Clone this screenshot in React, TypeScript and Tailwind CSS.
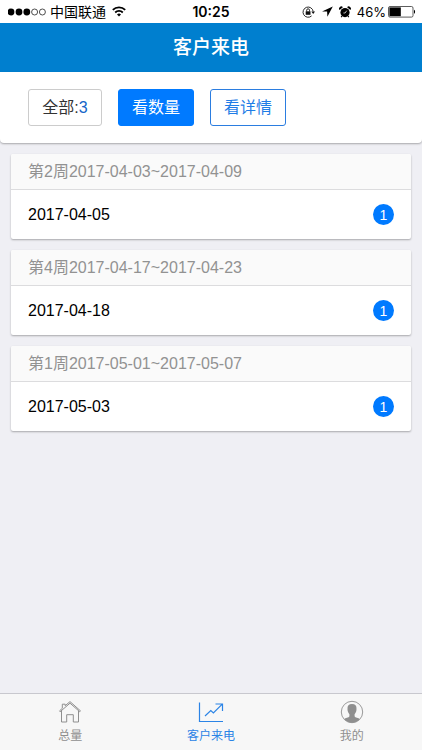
import React from "react";

const weeks = [
  { title: "第2周2017-04-03~2017-04-09", day: "2017-04-05", count: 1 },
  { title: "第4周2017-04-17~2017-04-23", day: "2017-04-18", count: 1 },
  { title: "第1周2017-05-01~2017-05-07", day: "2017-05-03", count: 1 },
];

function SignalDots() {
  return (
    <svg width="39" height="8" viewBox="0 0 39 8" aria-hidden="true">
      {[3, 11, 18.8].map((x) => (
        <circle key={x} cx={x} cy="4" r="3.4" fill="#000" />
      ))}
      {[26.6, 34.4].map((x) => (
        <circle key={x} cx={x} cy="4" r="3" fill="none" stroke="#222" strokeWidth="0.8" />
      ))}
    </svg>
  );
}

function WifiIcon() {
  return (
    <svg width="14" height="11" viewBox="0 0 14 11" fill="none" stroke="#000" strokeWidth="1.8" aria-hidden="true">
      <path d="M0.8 3.9a8.8 8.8 0 0 1 12.4 0" />
      <path d="M3.2 6.5a5.4 5.4 0 0 1 7.6 0" />
      <path d="M7 10.4L5 8.4a2.9 2.9 0 0 1 4 0z" fill="#000" stroke="none" />
    </svg>
  );
}

function RotationLockIcon() {
  return (
    <svg width="14" height="12" viewBox="0 0 14 12" fill="none" stroke="#111" aria-hidden="true">
      <path d="M11.2 5.5A5.1 5.1 0 1 0 9.6 9.9" strokeWidth="0.9" />
      <path d="M9.3 5.6h3.8L11.2 8z" fill="#111" stroke="none" />
      <rect x="3.7" y="5.3" width="4.8" height="3.5" fill="#111" stroke="none" />
      <path d="M4.7 5.5V4.2a1.4 1.4 0 0 1 2.8 0v1.3" strokeWidth="0.9" />
    </svg>
  );
}

function LocationIcon() {
  return (
    <svg width="11" height="11" viewBox="0 0 11 11" aria-hidden="true">
      <path d="M10.8 0.4L0 5.6h5.1l0.3 5.2z" fill="#000" />
    </svg>
  );
}

function AlarmIcon() {
  return (
    <svg width="12" height="12" viewBox="0 0 12 12" aria-hidden="true">
      <circle cx="6" cy="6.6" r="4.6" fill="#000" />
      <path d="M0.6 3.9A2.1 2.1 0 0 1 3.9 1.2zM11.4 3.9A2.1 2.1 0 0 0 8.1 1.2z" fill="#000" />
      <path d="M3 10l-0.8 1.2M9 10l0.8 1.2" stroke="#000" strokeWidth="1.2" />
      <path d="M7.7 4.7L6.1 7H4.4" fill="none" stroke="#fff" strokeWidth="0.7" />
    </svg>
  );
}

function BatteryIcon() {
  return (
    <svg width="28" height="12" viewBox="0 0 28 12" aria-hidden="true">
      <rect x="0.5" y="0.5" width="24.5" height="10.6" rx="1.5" fill="#fff" stroke="#333" strokeWidth="0.8" />
      <rect x="1.4" y="1.4" width="11.4" height="8.8" fill="#000" />
      <path d="M26 3.8c1.4 0.4 1.4 3.6 0 4z" fill="#000" />
    </svg>
  );
}

function HomeIcon() {
  return (
    <svg width="24" height="24" viewBox="0 0 24 24" fill="none" stroke="currentColor" strokeWidth="1" aria-hidden="true">
      <path d="M2.2 11.7L1.5 10.9 4.3 8.3V4.2h2.9v1.5L12 1.6l10.5 9.3-0.8 0.8L12 3.2z" />
      <path d="M3.5 11v11h5.2v-7.3h6.6V22h5.2V11" />
    </svg>
  );
}

function TrendIcon() {
  return (
    <svg width="26" height="24" viewBox="0 0 26 24" fill="none" stroke="currentColor" strokeWidth="1.2" aria-hidden="true">
      <path d="M1.5 2.5v19h23.5" />
      <path d="M7 16l5.8-5.4 2.6 2.4L24 4.3M17.5 4h7v7" />
    </svg>
  );
}

function PersonIcon() {
  return (
    <svg width="24" height="24" viewBox="0 0 24 24" aria-hidden="true">
      <circle cx="12" cy="12" r="10.7" fill="none" stroke="currentColor" strokeWidth="0.9" />
      <path
        d="M12 4c-3.2 0-4.8 1.7-4.5 5 .1.9 0 1.3.2 2 .4 1.5 1 2.4 1.7 3.3v2c-.5 1.5-4.1 1.5-5.2 3A11 11 0 0 0 12 22.7a11 11 0 0 0 7.8-3.4c-1.1-1.5-4.7-1.5-5.2-3v-2c.7-.9 1.3-1.8 1.7-3.3.2-.7.1-1.1.2-2 .3-3.3-1.3-5-4.5-5z"
        fill="currentColor"
      />
    </svg>
  );
}

const tabs = [
  { label: "总量", icon: <HomeIcon />, active: false },
  { label: "客户来电", icon: <TrendIcon />, active: true },
  { label: "我的", icon: <PersonIcon />, active: false },
];

export default function App() {
  return (
    <div className="flex min-h-screen flex-col bg-[#efeff4] font-['Liberation_Sans','Noto_Sans_CJK_SC',sans-serif] text-base text-black">
      <div className="grid h-[23px] shrink-0 grid-cols-[1fr_auto_1fr] items-center bg-white px-2 font-['Inter','Noto_Sans_CJK_SC',sans-serif] text-[13px] leading-5">
        <div className="flex items-center gap-[3px]">
          <SignalDots />
          <span className="text-sm leading-5">中国联通</span>
          <span className="pl-[3px]">
            <WifiIcon />
          </span>
        </div>
        <span className="text-sm leading-5 font-semibold">10:25</span>
        <div className="-mr-0.5 flex items-center justify-end gap-1.5">
          <RotationLockIcon />
          <LocationIcon />
          <AlarmIcon />
          <div className="flex items-center gap-0.5">
            <span>46%</span>
            <BatteryIcon />
          </div>
        </div>
      </div>

      <header className="flex h-[49px] shrink-0 items-center justify-center bg-[#007fcf] text-white">
        <h1 className="text-[19px] leading-6 font-medium">客户来电</h1>
      </header>

      <main className="flex-1">
        <section className="flex gap-4 rounded-b-sm bg-white px-7 py-[17px] shadow-[0_1px_2px_rgba(0,0,0,0.3)]">
          <button className="h-[37px] min-w-[74px] rounded-[3px] border border-[#ccc] px-[13px] leading-5 text-[#333]">
            全部:<span className="text-[#1565c8]">3</span>
          </button>
          <button className="h-[37px] rounded-[3px] border border-[#007aff] bg-[#007aff] px-[13px] leading-5 text-white">
            看数量
          </button>
          <button className="h-[37px] rounded-[3px] border border-[#2b7de0] px-[13px] leading-5 text-[#1f7de6]">
            看详情
          </button>
        </section>

        <div className="flex flex-col gap-[11px] px-[11px] py-[11px]">
          {weeks.map((week) => (
            <section key={week.title} className="rounded-xs bg-white shadow-[0_1px_2px_rgba(0,0,0,0.3)]">
              <h2 className="flex h-9 items-center rounded-t-xs border-b border-[#dcdcde] bg-[#fafafa] px-[17px] leading-6 text-[#929292]">
                {week.title}
              </h2>
              <div className="flex h-[49px] items-center justify-between px-[17px]">
                <span>{week.day}</span>
                <span className="flex size-[21px] items-center justify-center rounded-full bg-[#007aff] text-sm leading-5 text-white">
                  {week.count}
                </span>
              </div>
            </section>
          ))}
        </div>
      </main>

      <nav className="sticky bottom-0 grid h-[57px] shrink-0 grid-cols-3 border-t border-[#c8c8ce] bg-[#f7f7f7]">
        {tabs.map((tab) => (
          <a
            key={tab.label}
            href="#"
            aria-current={tab.active ? "page" : undefined}
            className={
              tab.active
                ? "flex flex-col items-center pt-1.5 text-[#2b84e6]"
                : "flex flex-col items-center pt-1.5 text-[#8f8f8f]"
            }
          >
            {tab.icon}
            <span className="text-xs leading-6">{tab.label}</span>
          </a>
        ))}
      </nav>
    </div>
  );
}
